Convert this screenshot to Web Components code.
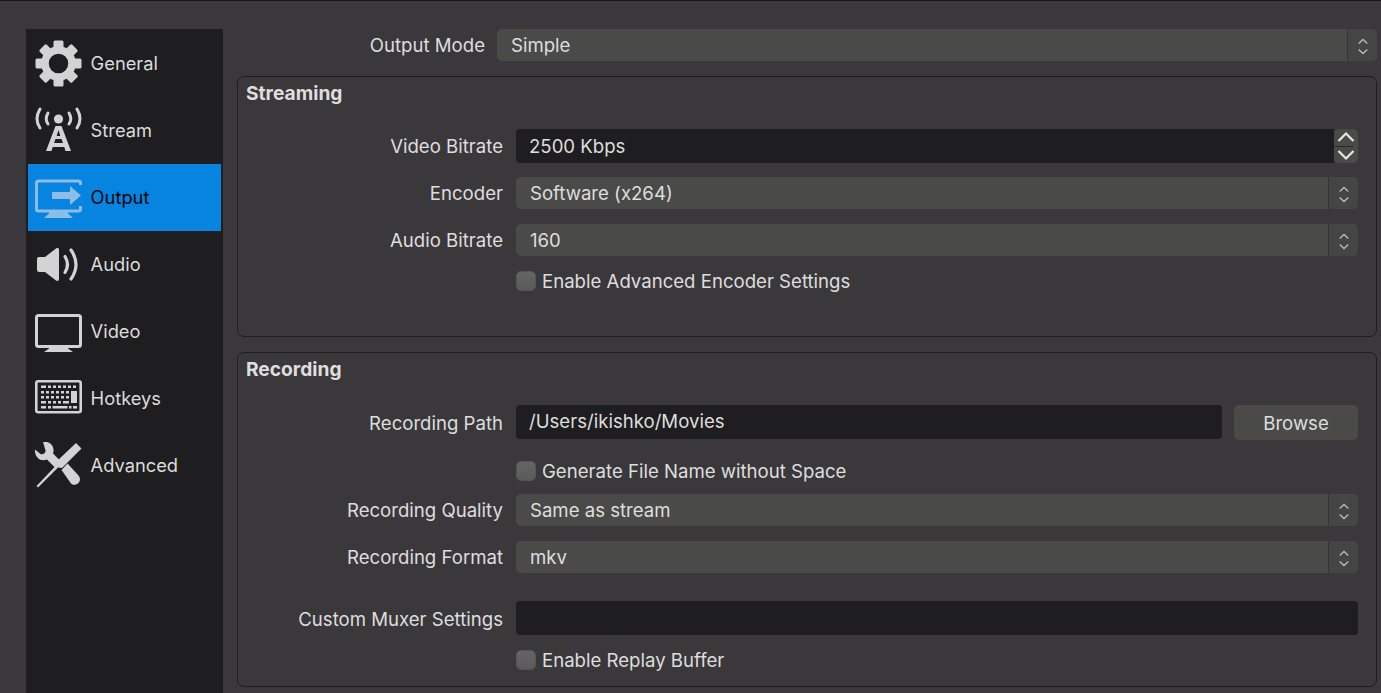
<!DOCTYPE html>
<html>
<head>
<meta charset="utf-8">
<title>Settings</title>
<style>
    html, body { margin: 0; height: 693px; overflow: hidden; }
    body {
        background: #3a383b;
        color: #dedede;
        font: 18.6px Inter, "Liberation Sans", sans-serif;
    }
    obs-group { --row-pad: 18px; }
</style>
</head>
<body>
<obs-settings>
    <obs-sidebar slot="nav">
        <obs-nav-item icon="general">General</obs-nav-item>
        <obs-nav-item icon="stream">Stream</obs-nav-item>
        <obs-nav-item icon="output" active>Output</obs-nav-item>
        <obs-nav-item icon="audio">Audio</obs-nav-item>
        <obs-nav-item icon="video">Video</obs-nav-item>
        <obs-nav-item icon="hotkeys">Hotkeys</obs-nav-item>
        <obs-nav-item icon="advanced">Advanced</obs-nav-item>
    </obs-sidebar>

    <obs-row label="Output Mode" style="--label-width: 248px; --label-gap: 12px">
        <obs-select>Simple</obs-select>
    </obs-row>

    <obs-group title="Streaming" style="margin-top: 15px; height: 261px">
        <obs-row label="Video Bitrate"><obs-spin>2500 Kbps</obs-spin></obs-row>
        <obs-row label="Encoder" style="margin-top: 14px"><obs-select>Software (x264)</obs-select></obs-row>
        <obs-row label="Audio Bitrate" style="margin-top: 15px"><obs-select>160</obs-select></obs-row>
        <obs-row style="margin-top: 15px"><obs-check>Enable Advanced Encoder Settings</obs-check></obs-row>
    </obs-group>

    <obs-group title="Recording" style="margin-top: 15px; height: 335px">
        <obs-row label="Recording Path">
            <obs-path-field>/Users/ikishko/Movies</obs-path-field>
        </obs-row>
        <obs-row style="margin-top: 21px"><obs-check>Generate File Name without Space</obs-check></obs-row>
        <obs-row label="Recording Quality" style="margin-top: 13px"><obs-select>Same as stream</obs-select></obs-row>
        <obs-row label="Recording Format" style="margin-top: 15px"><obs-select>mkv</obs-select></obs-row>
        <obs-row label="Custom Muxer Settings" style="margin-top: 28px; --label-shift: 2px"><obs-input></obs-input></obs-row>
        <obs-row style="margin-top: 15px"><obs-check>Enable Replay Buffer</obs-check></obs-row>
    </obs-group>
</obs-settings>

<script>
const ICONS = {
    general: `
        <g fill="currentColor">
            <rect x="18.5" y="0.5" width="10" height="10" rx="1.5"/>
            <rect x="18.5" y="0.5" width="10" height="10" rx="1.5" transform="rotate(45 23.5 23.5)"/>
            <rect x="18.5" y="0.5" width="10" height="10" rx="1.5" transform="rotate(90 23.5 23.5)"/>
            <rect x="18.5" y="0.5" width="10" height="10" rx="1.5" transform="rotate(135 23.5 23.5)"/>
            <rect x="18.5" y="0.5" width="10" height="10" rx="1.5" transform="rotate(180 23.5 23.5)"/>
            <rect x="18.5" y="0.5" width="10" height="10" rx="1.5" transform="rotate(225 23.5 23.5)"/>
            <rect x="18.5" y="0.5" width="10" height="10" rx="1.5" transform="rotate(270 23.5 23.5)"/>
            <rect x="18.5" y="0.5" width="10" height="10" rx="1.5" transform="rotate(315 23.5 23.5)"/>
        </g>
        <circle cx="23.5" cy="23.5" r="13.5" fill="none" stroke="currentColor" stroke-width="7.5"/>`,
    stream: `
        <circle cx="23.5" cy="12" r="4.6" fill="currentColor"/>
        <g fill="none" stroke="currentColor" stroke-width="3" stroke-linecap="round">
            <path d="M5 2Q-1 12 5 21M42 2Q48 12 42 21"/>
            <path d="M13 6Q9.5 12 13 17M34 6Q37.5 12 34 17"/>
        </g>
        <path d="M20.5 19h6l9.5 25h-5.5l-1.2-4h-11.600l-1.200 4h-5.500zM23.500 23l-1.800 6h3.600zM20.500 32l-1.500 4h9l-1.500-4z" fill="currentColor" fill-rule="evenodd"/>`,
    output: `
        <path d="M45.500 11V9a2 2 0 0 0-2-2H3.500a2 2 0 0 0-2 2v26a2 2 0 0 0 2 2h40a2 2 0 0 0 2-2v-3" fill="none" stroke="currentColor" stroke-width="3"/>
        <path d="M14 37h19v2.500l5 4.500H9l5-4.500z" fill="currentColor"/>
        <path d="M17 18h18v-6l11 9.500-11 9.500v-6H17z" fill="currentColor"/>`,
    audio: `
        <path d="M2 18a2 2 0 0 1 2-2h6l11-8.500c1.500-1 3-.5 3 1.500v29c0 2-1.500 2.500-3 1.500L10 31H4a2 2 0 0 1-2-2z" fill="currentColor"/>
        <g fill="none" stroke="currentColor" stroke-width="3.200" stroke-linecap="round">
            <path d="M30 15.500Q35 23.500 30 31.500"/>
            <path d="M36 9Q46 23.500 36 38"/>
        </g>`,
    video: `
        <rect x="1.500" y="7.500" width="44" height="31" rx="2" fill="none" stroke="currentColor" stroke-width="3"/>
        <path d="M14 39h19v1.500l5 3.500H9l5-3.500z" fill="currentColor"/>`,
    hotkeys: `
        <rect x="1.300" y="6.300" width="44.400" height="31" rx="2" fill="none" stroke="currentColor" stroke-width="2.600"/>
        <g fill="currentColor">
            <path d="M6 10.500h5v2.500H6zM13 10.500h3v2.500h-3zM18 10.500h3v2.500h-3zM23 10.500h3v2.500h-3zM28 10.500h3v2.500h-3zM33 10.500h3v2.500h-3zM38 10.500h3v2.500h-3z"/>
            <path d="M6 16h3v2.500H6zM11 16h3v2.500h-3zM16 16h3v2.500h-3zM21 16h3v2.500h-3zM26 16h3v2.500h-3zM31 16h3v2.500h-3zM36 16h6v12h-6z"/>
            <path d="M6 21h3v2.500H6zM11 21h3v2.500h-3zM16 21h3v2.500h-3zM21 21h3v2.500h-3zM26 21h3v2.500h-3zM31 21h3v2.500h-3z"/>
            <path d="M6 26h5v2.500H6zM13 26h3v2.500h-3zM18 26h3v2.500h-3zM23 26h3v2.500h-3zM28 26h6v2.500h-6z"/>
            <path d="M6 31h5v2.500H6zM13 31h3v2.500h-3zM17.500 31h15v2.500h-15zM34 31h2.500v2.500H34zM38 31h4v2.500h-4z"/>
        </g>`,
    advanced: `
        <path d="M8 0c5-1 10 2 10.500 7.500.2 2.500-.5 4-.5 4l9 9-6 6-9-9s-2 1-5.500.5C2.500 17 -.5 12.500 0 7.500l5.500 4.500c2.500 1 5.500-1 5-3.500z" fill="currentColor"/>
        <path d="M26.500 28l6-6.500 11 12c2 2.500 2 5.500 0 7.500s-5.500 2.500-7.500.5z" fill="currentColor"/>
        <path d="M41 1l5.500 5.500L27 26l-4-0.500L3 45.500 1.500 44l20.500-21.500-.500-3z" fill="currentColor"/>`
};

class ObsSettings extends HTMLElement {
    connectedCallback() {
        this.attachShadow({ mode: 'open' });
        this.shadowRoot.innerHTML = `
            <style>
                :host {
                    display: flex;
                    height: 692px;
                    border-top: 1px solid #18171a;
                    padding: 28px 4px 0 26px;
                    overflow: hidden;
                }
                main {
                    flex: 1;
                    margin-left: 14px;
                }
            </style>
            <slot name="nav"></slot>
            <main><slot></slot></main>
        `;
    }
}

class ObsSidebar extends HTMLElement {
    connectedCallback() {
        this.attachShadow({ mode: 'open' });
        this.shadowRoot.innerHTML = `
            <style>
                :host {
                    display: block;
                    width: 197px;
                    height: 664px;
                    box-sizing: border-box;
                    padding: 1px 2px;
                    background: #1e1d1f;
                }
            </style>
            <slot></slot>
        `;
    }
}

class ObsNavItem extends HTMLElement {
    connectedCallback() {
        const active = this.hasAttribute('active');
        this.attachShadow({ mode: 'open' });
        this.shadowRoot.innerHTML = `
            <style>
                :host {
                    display: flex;
                    align-items: center;
                    gap: 9px;
                    height: 67px;
                    padding-left: 7px;
                    font-size: 18.3px;
                    color: ${active ? '#060606' : '#dcdcdc'};
                    background: ${active ? '#0783e0' : 'transparent'};
                }
                svg {
                    flex: none;
                    color: ${active ? '#8dbde6' : '#d3d3d3'};
                }
                .text { margin-bottom: 2px; margin-left: -0.4px; }
            </style>
            <svg width="47" height="47" viewBox="0 0 47 47">${ICONS[this.getAttribute('icon')]}</svg>
            <div class="text"><slot></slot></div>
        `;
    }
}

class ObsGroup extends HTMLElement {
    connectedCallback() {
        this.attachShadow({ mode: 'open' });
        this.shadowRoot.innerHTML = `
            <style>
                :host {
                    display: block;
                    box-sizing: border-box;
                    border: 1px solid #1e1d1f;
                    border-radius: 7px;
                }
                h2 {
                    margin: 5px 0 25px 8px;
                    font-size: 19.2px;
                    font-weight: 700;
                    line-height: 22px;
                }
            </style>
            <h2>${this.getAttribute('title')}</h2>
            <slot></slot>
        `;
    }
}

class ObsRow extends HTMLElement {
    connectedCallback() {
        this.attachShadow({ mode: 'open' });
        this.shadowRoot.innerHTML = `
            <style>
                :host {
                    display: grid;
                    grid-template-columns: var(--label-width, 265px) 1fr;
                    column-gap: var(--label-gap, 13px);
                    align-items: center;
                    padding-right: var(--row-pad, 0);
                }
                label {
                    text-align: right;
                    white-space: nowrap;
                    padding-top: var(--label-shift, 0);
                }
            </style>
            <label>${this.getAttribute('label') || ''}</label>
            <slot></slot>
        `;
    }
}

const CHEVRONS = `
    <svg width="12" height="17" viewBox="0 0 12 17" fill="none" stroke="#bcbcbc" stroke-width="1.3" style="margin-top: 2px">
        <path d="M1.700 5.500L6 1.500 10.300 5.500M1.700 11.500L6 15.500 10.300 11.500"/>
    </svg>`;

class ObsSelect extends HTMLElement {
    connectedCallback() {
        this.attachShadow({ mode: 'open' });
        this.shadowRoot.innerHTML = `
            <style>
                :host {
                    display: flex;
                    height: 32px;
                    border-radius: 5px;
                    overflow: hidden;
                    background: #4a4a48;
                }
                .value {
                    flex: 1;
                    display: flex;
                    align-items: center;
                    padding-left: 14px;
                }
                .arrows {
                    flex: none;
                    width: 29px;
                    display: flex;
                    align-items: center;
                    justify-content: center;
                    background: #454545;
                    border-left: 1px solid #353535;
                }
            </style>
            <div class="value"><slot></slot></div>
            <div class="arrows">${CHEVRONS}</div>
        `;
    }
}

class ObsInput extends HTMLElement {
    connectedCallback() {
        this.attachShadow({ mode: 'open' });
        this.shadowRoot.innerHTML = `
            <style>
                :host {
                    display: flex;
                    align-items: center;
                    box-sizing: border-box;
                    height: 34px;
                    padding: 0 0 2px 13px;
                    border-radius: 4px;
                    background: #1e1d1f;
                }
            </style>
            <slot></slot>
        `;
    }
}

class ObsSpin extends HTMLElement {
    connectedCallback() {
        this.attachShadow({ mode: 'open' });
        this.shadowRoot.innerHTML = `
            <style>
                :host { display: flex; height: 34px; }
                .field {
                    flex: 1;
                    display: flex;
                    align-items: center;
                    padding: 0 0 1px 13px;
                    border-radius: 4px 0 0 4px;
                    background: #1e1d1f;
                }
                .buttons {
                    flex: none;
                    width: 24px;
                    display: flex;
                    flex-direction: column;
                    border-radius: 5px;
                    overflow: hidden;
                    background: #4a4a48;
                }
                .buttons svg { display: block; }
                .rule { flex: none; height: 1px; margin-right: 5px; background: #2a292b; }
            </style>
            <div class="field"><slot></slot></div>
            <div class="buttons">
                <svg width="24" height="17" viewBox="0 0 24 17" fill="none" stroke="#e6e6e6" stroke-width="2.2"><path d="M4.500 12L12 4.500 19.500 12"/></svg>
                <div class="rule"></div>
                <svg width="24" height="16" viewBox="0 0 24 16" fill="none" stroke="#e6e6e6" stroke-width="2.2"><path d="M4.500 4L12 11.500 19.500 4"/></svg>
            </div>
        `;
    }
}

class ObsPathField extends HTMLElement {
    connectedCallback() {
        this.attachShadow({ mode: 'open' });
        this.shadowRoot.innerHTML = `
            <style>
                :host { display: flex; gap: 12px; align-items: flex-start; height: 35px; }
                obs-input { flex: 1; }
                obs-button { flex: none; }
            </style>
            <obs-input><slot></slot></obs-input>
            <obs-button>Browse</obs-button>
        `;
    }
}

class ObsButton extends HTMLElement {
    connectedCallback() {
        this.attachShadow({ mode: 'open' });
        this.shadowRoot.innerHTML = `
            <style>
                :host {
                    display: flex;
                    align-items: center;
                    justify-content: center;
                    width: 124px;
                    height: 35px;
                    border-radius: 5px;
                    background: #4a4a48;
                }
            </style>
            <slot></slot>
        `;
    }
}

class ObsCheck extends HTMLElement {
    connectedCallback() {
        this.attachShadow({ mode: 'open' });
        this.shadowRoot.innerHTML = `
            <style>
                :host {
                    display: flex;
                    align-items: center;
                    gap: 6px;
                    height: 20px;
                }
                .box {
                    flex: none;
                    width: 20px;
                    height: 20px;
                    box-sizing: border-box;
                    border: 1px solid #555;
                    border-radius: 5px;
                    background: linear-gradient(#656565, #5a5a5a);
                }
            </style>
            <div class="box"></div>
            <slot></slot>
        `;
    }
}

customElements.define('obs-settings', ObsSettings);
customElements.define('obs-sidebar', ObsSidebar);
customElements.define('obs-nav-item', ObsNavItem);
customElements.define('obs-group', ObsGroup);
customElements.define('obs-row', ObsRow);
customElements.define('obs-select', ObsSelect);
customElements.define('obs-input', ObsInput);
customElements.define('obs-spin', ObsSpin);
customElements.define('obs-button', ObsButton);
customElements.define('obs-path-field', ObsPathField);
customElements.define('obs-check', ObsCheck);
</script>
</body>
</html>
